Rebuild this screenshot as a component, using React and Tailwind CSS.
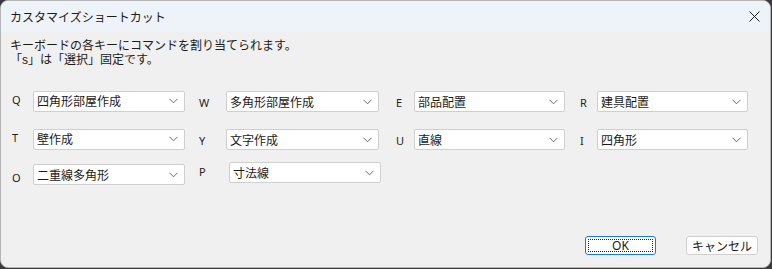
import { useState } from "react";

const jp = { fontFamily: '"Noto Sans CJK JP", "Noto Sans", sans-serif' };
const latin = { fontFamily: '"Noto Sans", "Liberation Sans", sans-serif' };
const body = { fontFamily: '"Liberation Sans", "Noto Sans CJK JP", sans-serif' };

function Chevron() {
  return (
    <svg width="9" height="6" viewBox="0 0 9 6" className="shrink-0">
      <path d="M0.5 0.8 L4.5 4.8 L8.5 0.8" fill="none" stroke="#6b6b6b" strokeWidth="1" />
    </svg>
  );
}

function Combo({ value, width = "w-[152px]", extra = "" }) {
  return (
    <div
      className={`${width} h-[21px] bg-white border border-[#cfcfcf] rounded-[2px] flex items-center justify-between pl-[3px] pr-[6px] ${extra}`}
    >
      <span className="text-[12px] leading-none text-[#1a1a1a]" style={jp}>{value}</span>
      <Chevron />
    </div>
  );
}

function Label({ k, width, extra = "" }) {
  return (
    <span className={`${width} text-[11px] leading-none text-[#222] ${extra}`} style={latin}>
      {k}
    </span>
  );
}

function App() {
  const [rows] = useState([
    [
      ["Q", "四角形部屋作成"],
      ["W", "多角形部屋作成"],
      ["E", "部品配置"],
      ["R", "建具配置"],
    ],
    [
      ["T", "壁作成"],
      ["Y", "文字作成"],
      ["U", "直線"],
      ["I", "四角形"],
    ],
  ]);

  return (
    <div className="w-[772px] h-[269px] bg-[#3a3a3a] overflow-hidden">
      <div className="w-[771px] h-[268px] bg-[#f0f0f0] rounded-[8px] border border-[#b5b5b5] overflow-hidden flex flex-col">
        <div className="h-[31px] bg-[#eef3f9] flex items-center justify-between pl-[9px] pr-[10px] shrink-0">
          <span className="text-[12px] text-[#1a1a1a]" style={jp}>カスタマイズショートカット</span>
          <svg width="11" height="11" viewBox="0 0 11 11">
            <path d="M0.5 0.5 L10.5 10.5 M10.5 0.5 L0.5 10.5" stroke="#1a1a1a" strokeWidth="1" />
          </svg>
        </div>

        <div className="flex-1 flex flex-col">
          <div className="pl-[9px] pt-[8px] flex flex-col gap-[1px] text-[12px] leading-[13px] text-[#1a1a1a]" style={body}>
            <div>キーボードの各キーにコマンドを割り当てられます。</div>
            <div>「s」は「選択」固定です。</div>
          </div>

          <div className="flex flex-col gap-[16px] mt-[23px] pl-[11px]">
            {rows.map((row, i) => (
              <div key={i} className="flex items-center">
                <Label k={row[0][0]} width="w-[21px]" extra="-mt-[4px]" />
                <Combo value={row[0][1]} />
                <Label k={row[1][0]} width="w-[27px] ml-[14px]" extra="mt-[2px]" />
                <Combo value={row[1][1]} width="w-[153px]" extra="mt-[1px]" />
                <Label k={row[2][0]} width="w-[18px] ml-[17px]" extra="mt-[2px]" />
                <Combo value={row[2][1]} width="w-[151px]" extra="mt-[1px]" />
                <Label k={row[3][0]} width="w-[17px] ml-[15px]" extra="mt-[2px]" />
                <Combo value={row[3][1]} width="w-[151px]" extra="mt-[1px]" />
              </div>
            ))}
            <div className="flex items-start -mt-[3px]">
              <Label k="O" width="w-[21px]" extra="mt-[9px]" />
              <Combo value="二重線多角形" extra="mt-[1px]" />
              <Label k="P" width="w-[30px] ml-[14px]" extra="mt-[3px]" />
              <Combo value="寸法線" extra="-mt-[1px]" />
            </div>
          </div>

          <div className="flex justify-end gap-[30px] pr-[12px] mt-auto mb-[12px]">
            <button className="w-[71px] h-[19px] bg-white border border-[#1a7ad8] rounded-[3px] p-[2px] flex">
              <span className="flex-1 border border-dotted border-[#222] flex items-center justify-center text-[12px] leading-none text-[#1a1a1a]" style={latin}>
                OK
              </span>
            </button>
            <button className="w-[72px] h-[19px] bg-[#fdfdfd] border border-[#d0d0d0] rounded-[3px] flex items-center justify-center text-[12px] leading-none text-[#1a1a1a]" style={jp}>
              キャンセル
            </button>
          </div>
        </div>
      </div>
    </div>
  );
}

export default App;
